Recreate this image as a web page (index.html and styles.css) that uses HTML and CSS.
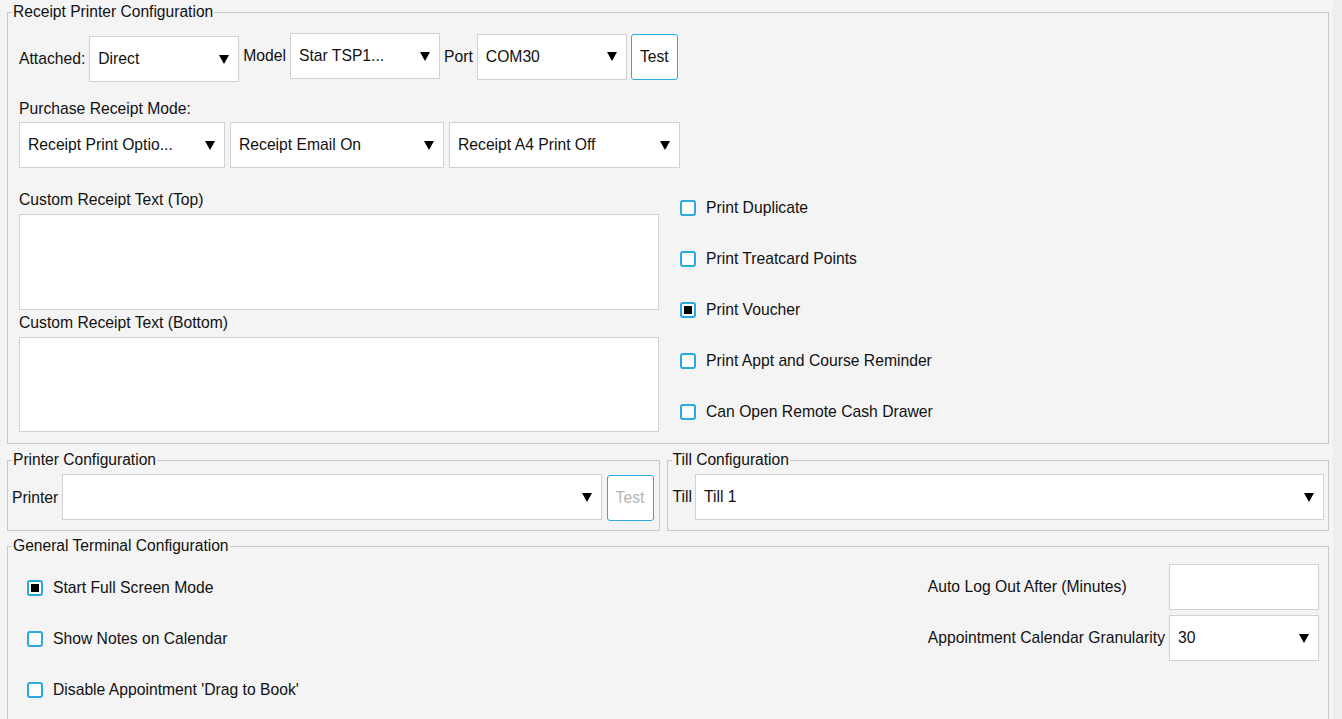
FILE: index.html
```html
<!DOCTYPE html>
<html>
<head>
<meta charset="utf-8">
<link rel="stylesheet" href="styles.css">
</head>
<body>
<div class="page">
  <fieldset class="box box-receipt">
    <legend>Receipt Printer Configuration</legend>
    <div class="receipt-body">
      <div class="row1">
        <div class="group group-attached">
          <span class="lbl">Attached:</span>
          <div class="select w-attached"><span>Direct</span><svg class="caret" viewBox="0 0 10 9"><path d="M0 0H10L5 9Z"/></svg></div>
        </div>
        <div class="group">
          <span class="lbl">Model</span>
          <div class="select w-model"><span>Star TSP1...</span><svg class="caret" viewBox="0 0 10 9"><path d="M0 0H10L5 9Z"/></svg></div>
        </div>
        <div class="group">
          <span class="lbl">Port</span>
          <div class="select w-port"><span>COM30</span><svg class="caret" viewBox="0 0 10 9"><path d="M0 0H10L5 9Z"/></svg></div>
          <button class="btn btn-top">Test</button>
        </div>
      </div>
      <div class="mode-label">Purchase Receipt Mode:</div>
      <div class="row2">
        <div class="select w-m1"><span>Receipt Print Optio...</span><svg class="caret" viewBox="0 0 10 9"><path d="M0 0H10L5 9Z"/></svg></div>
        <div class="select w-m2"><span>Receipt Email On</span><svg class="caret" viewBox="0 0 10 9"><path d="M0 0H10L5 9Z"/></svg></div>
        <div class="select w-m3"><span>Receipt A4 Print Off</span><svg class="caret" viewBox="0 0 10 9"><path d="M0 0H10L5 9Z"/></svg></div>
      </div>
      <div class="lower">
        <div class="texts">
          <div class="tlabel">Custom Receipt Text (Top)</div>
          <textarea class="tarea ta-top"></textarea>
          <div class="tlabel tlabel-2">Custom Receipt Text (Bottom)</div>
          <textarea class="tarea ta-bottom"></textarea>
        </div>
        <div class="checks">
          <div class="check"><span class="cb"></span><span>Print Duplicate</span></div>
          <div class="check"><span class="cb"></span><span>Print Treatcard Points</span></div>
          <div class="check"><span class="cb on"><i></i></span><span>Print Voucher</span></div>
          <div class="check"><span class="cb"></span><span>Print Appt and Course Reminder</span></div>
          <div class="check"><span class="cb"></span><span>Can Open Remote Cash Drawer</span></div>
        </div>
      </div>
    </div>
  </fieldset>

  <div class="mid">
    <fieldset class="box box-printer">
      <legend>Printer Configuration</legend>
      <div class="printer-body">
        <span class="lbl">Printer</span>
        <div class="select grow"><span></span><svg class="caret" viewBox="0 0 10 9"><path d="M0 0H10L5 9Z"/></svg></div>
        <button class="btn btn-disabled">Test</button>
      </div>
    </fieldset>
    <fieldset class="box box-till">
      <legend>Till Configuration</legend>
      <div class="till-body">
        <span class="lbl">Till</span>
        <div class="select grow"><span>Till 1</span><svg class="caret" viewBox="0 0 10 9"><path d="M0 0H10L5 9Z"/></svg></div>
      </div>
    </fieldset>
  </div>

  <fieldset class="box box-general">
    <legend>General Terminal Configuration</legend>
    <div class="general-body">
      <div class="gchecks">
        <div class="check"><span class="cb on"><i></i></span><span>Start Full Screen Mode</span></div>
        <div class="check"><span class="cb"></span><span>Show Notes on Calendar</span></div>
        <div class="check"><span class="cb"></span><span>Disable Appointment 'Drag to Book'</span></div>
      </div>
      <div class="gfields">
        <span class="lbl">Auto Log Out After (Minutes)</span>
        <div class="input"></div>
        <span class="lbl">Appointment Calendar Granularity</span>
        <div class="select"><span>30</span><svg class="caret" viewBox="0 0 10 9"><path d="M0 0H10L5 9Z"/></svg></div>
      </div>
    </div>
  </fieldset>
</div>
</body>
</html>
```
FILE: styles.css
```css
* { box-sizing: border-box; }
html, body {
  margin: 0;
  padding: 0;
  height: 100%;
  overflow: hidden;
}
body {
  background: #eeeeee;
  font-family: "Liberation Sans", Arial, sans-serif;
  font-size: 15.7px;
  color: #111;
}
.page {
  width: 1333px;
  height: 719px;
  background: #f4f4f4;
  padding: 3px 4px 0 7px;
  display: flex;
  flex-direction: column;
}
.box {
  margin: 0;
  padding: 0;
  border: 1px solid #c9c9c9;
  min-width: 0;
}
.box legend {
  margin-left: 4px;
  padding: 0 1px;
  font-size: 15.6px;
  line-height: 18px;
  color: #111;
}
.lbl {
  white-space: nowrap;
  line-height: 18px;
}

/* select-like control */
.select {
  height: 46px;
  background: #fff;
  border: 1px solid #d2d2d2;
  display: flex;
  align-items: center;
  justify-content: space-between;
  padding: 0 9px 0 8px;
  white-space: nowrap;
  color: #111;
}
.caret {
  width: 10px;
  height: 9px;
  flex: 0 0 auto;
  fill: #000;
}
.input {
  height: 46px;
  background: #fff;
  border: 1px solid #d2d2d2;
}
.btn {
  font-family: "Liberation Sans", Arial, sans-serif;
  font-size: 15.7px;
  width: 47px;
  height: 46px;
  padding: 0;
  background: #fff;
  border: 1px solid #2ea9e3;
  border-radius: 3px;
  color: #111;
}
.btn-disabled {
  color: #b5b5b5;
  margin-top: 1px;
}

/* receipt printer */
.box-receipt { width: 1322px; }
.receipt-body {
  padding: 12px 11px 8px 11px;
}
.row1 {
  display: flex;
  align-items: flex-start;
  gap: 4px;
}
.group {
  display: flex;
  align-items: center;
  gap: 4px;
}
.group-attached { margin-top: 3px; }
.w-attached { width: 150px; }
.w-model { width: 150px; }
.w-port { width: 150px; }
.btn-top { margin-top: 1px; }
.mode-label {
  margin-top: 18px;
  line-height: 18px;
}
.row2 {
  display: flex;
  gap: 5px;
  margin-top: 4px;
}
.w-m1 { width: 206px; }
.w-m2 { width: 214px; }
.w-m3 { width: 231px; }
.lower {
  display: flex;
  margin-top: 17px;
  gap: 21px;
}
.texts {
  width: 640px;
  display: flex;
  flex-direction: column;
  padding-top: 6px;
}
.tlabel {
  line-height: 18px;
  margin-bottom: 5px;
}
.tlabel-2 { margin-top: 4px; }
.tarea {
  display: block;
  width: 640px;
  background: #fff;
  border: 1px solid #d2d2d2;
  resize: none;
  margin: 0;
  padding: 0;
  outline: none;
}
.ta-top { height: 96px; }
.ta-bottom { height: 95px; }
.checks, .gchecks {
  display: flex;
  flex-direction: column;
  gap: 5px;
}
.gchecks { margin-top: 1px; }
.check {
  height: 46px;
  display: flex;
  align-items: center;
  gap: 10px;
  white-space: nowrap;
  color: #111;
}
.cb {
  width: 16px;
  height: 16px;
  border: 2px solid #2aa8e2;
  border-radius: 3px;
  background: #fff;
  display: flex;
  align-items: center;
  justify-content: center;
  flex: 0 0 auto;
}
.cb i {
  display: block;
  width: 8px;
  height: 8px;
  background: #000;
}

/* middle row */
.mid {
  display: flex;
  gap: 7px;
  margin-top: 7px;
}
.box-printer { width: 653px; }
.box-till { width: 663px; }
.printer-body {
  display: flex;
  align-items: flex-start;
  gap: 4px;
  padding: 5px 5px 9px 4px;
}
.printer-body .lbl, .till-body .lbl { align-self: center; }
.grow { flex: 1 1 auto; }
.printer-body .btn { margin-left: 1px; }
.till-body {
  display: flex;
  align-items: center;
  gap: 3px;
  padding: 5px 4px 9px 5px;
}

/* general */
.box-general {
  width: 1322px;
  flex: 1 0 auto;
  margin-top: 6px;
}
.general-body {
  display: flex;
  justify-content: space-between;
  align-items: flex-start;
  padding: 9px 9px 20px 19px;
}
.gfields {
  display: grid;
  grid-template-columns: auto 150px;
  grid-auto-rows: 46px;
  column-gap: 4px;
  row-gap: 5px;
  align-items: center;
}
.gfields .input, .gfields .select { width: 150px; }
```
